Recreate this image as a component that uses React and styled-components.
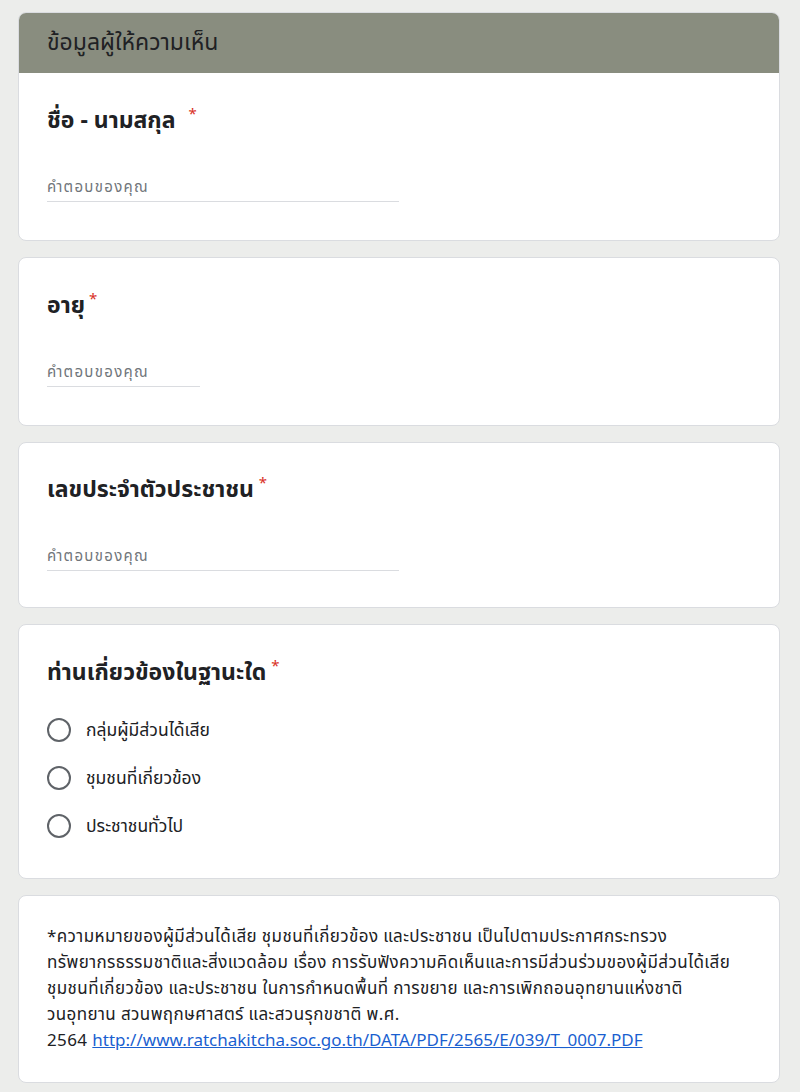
import React from "react";
import styled, { createGlobalStyle } from "styled-components";

const Global = createGlobalStyle`
  html, body { margin: 0; padding: 0; background: #ecedeb; }
  body {
    font-family: "Noto Sans Thai", "Leelawadee UI", Tahoma, "Noto Sans", "DejaVu Sans", sans-serif;
    color: #202124;
  }
`;

const Page = styled.div`
  display: flex;
  flex-direction: column;
  gap: 16px;
  padding: 12px 20px 10px 18px;
`;

const Card = styled.section`
  background: #fff;
  border: 1px solid #dadce0;
  border-radius: 8px;
  overflow: hidden;
  display: flex;
  flex-direction: column;
`;

const Header = styled.div`
  background: #898d7f;
  height: 60px;
  display: flex;
  align-items: center;
  padding: 0 28px;
  font-size: 23px;
  color: #202124;
`;

const Body = styled.div`
  padding: ${(p) => p.$pad || "32px 28px 38px 28px"};
  display: flex;
  flex-direction: column;
`;

const Title = styled.div`
  font-size: 23px;
  font-weight: 700;
  line-height: 32px;
  color: #202124;
`;

const Star = styled.span`
  color: #d93025;
  font-weight: 400;
  font-size: 15px;
  margin-left: ${(p) => p.$gap || 4}px;
  vertical-align: top;
  position: relative;
  top: -6px;
`;

const Input = styled.div`
  margin-top: 36px;
  width: ${(p) => p.$w}px;
  height: 28px;
  border-bottom: 1px solid #dadce0;
  font-size: 15px;
  letter-spacing: 1.3px;
  color: #70757a;
  display: flex;
  align-items: center;
`;

const Options = styled.div`
  display: flex;
  flex-direction: column;
  margin-top: 17px;
  margin-bottom: -9px;
`;

const Option = styled.label`
  height: 48px;
  display: flex;
  align-items: center;
  gap: 15px;
  font-size: 17.5px;
  color: #202124;
`;

const Radio = styled.span`
  width: 20px;
  height: 20px;
  border: 2px solid #5f6368;
  border-radius: 50%;
  flex: none;
`;

const Note = styled.div`
  font-size: 17px;
  line-height: 26px;
  letter-spacing: 0.4px;
  color: #202124;
  display: flex;
  flex-direction: column;
`;

const Line = styled.span`
  white-space: nowrap;
`;

const Link = styled.a`
  color: #1a5fd0;
  text-decoration: underline;
  letter-spacing: 0;
`;

function TextQuestion({ title, gap, width, pad }) {
  return (
    <Card>
      <Body $pad={pad}>
        <Title>
          {title}
          <Star $gap={gap}>*</Star>
        </Title>
        <Input $w={width}>คำตอบของคุณ</Input>
      </Body>
    </Card>
  );
}

export default function App() {
  return (
    <>
      <Global />
      <Page>
        <Card>
          <Header>ข้อมูลผู้ให้ความเห็น</Header>
          <Body>
            <Title>
              ชื่อ - นามสกุล
              <Star $gap={13}>*</Star>
            </Title>
            <Input $w={352}>คำตอบของคุณ</Input>
          </Body>
        </Card>
        <TextQuestion title="อายุ" gap={4} width={153} />
        <TextQuestion title="เลขประจำตัวประชาชน" gap={5} width={352} pad="31px 28px 36px 28px" />
        <Card>
          <Body $pad="32px 28px 37px 28px">
            <Title>
              ท่านเกี่ยวข้องในฐานะใด
              <Star $gap={5}>*</Star>
            </Title>
            <Options>
              {["กลุ่มผู้มีส่วนได้เสีย", "ชุมชนที่เกี่ยวข้อง", "ประชาชนทั่วไป"].map((t) => (
                <Option key={t}>
                  <Radio />
                  {t}
                </Option>
              ))}
            </Options>
          </Body>
        </Card>
        <Card>
          <Body $pad="28px 28px 28px 28px">
            <Note>
              <Line>*ความหมายของผู้มีส่วนได้เสีย ชุมชนที่เกี่ยวข้อง และประชาชน เป็นไปตามประกาศกระทรวง</Line>
              <Line>ทรัพยากรธรรมชาติและสิ่งแวดล้อม เรื่อง การรับฟังความคิดเห็นและการมีส่วนร่วมของผู้มีส่วนได้เสีย</Line>
              <Line>ชุมชนที่เกี่ยวข้อง และประชาชน ในการกำหนดพื้นที่ การขยาย และการเพิกถอนอุทยานแห่งชาติ</Line>
              <Line>วนอุทยาน สวนพฤกษศาสตร์ และสวนรุกขชาติ พ.ศ.</Line>
              <Line>
                2564{" "}
                <Link href="#">http://www.ratchakitcha.soc.go.th/DATA/PDF/2565/E/039/T_0007.PDF</Link>
              </Line>
            </Note>
          </Body>
        </Card>
      </Page>
    </>
  );
}
